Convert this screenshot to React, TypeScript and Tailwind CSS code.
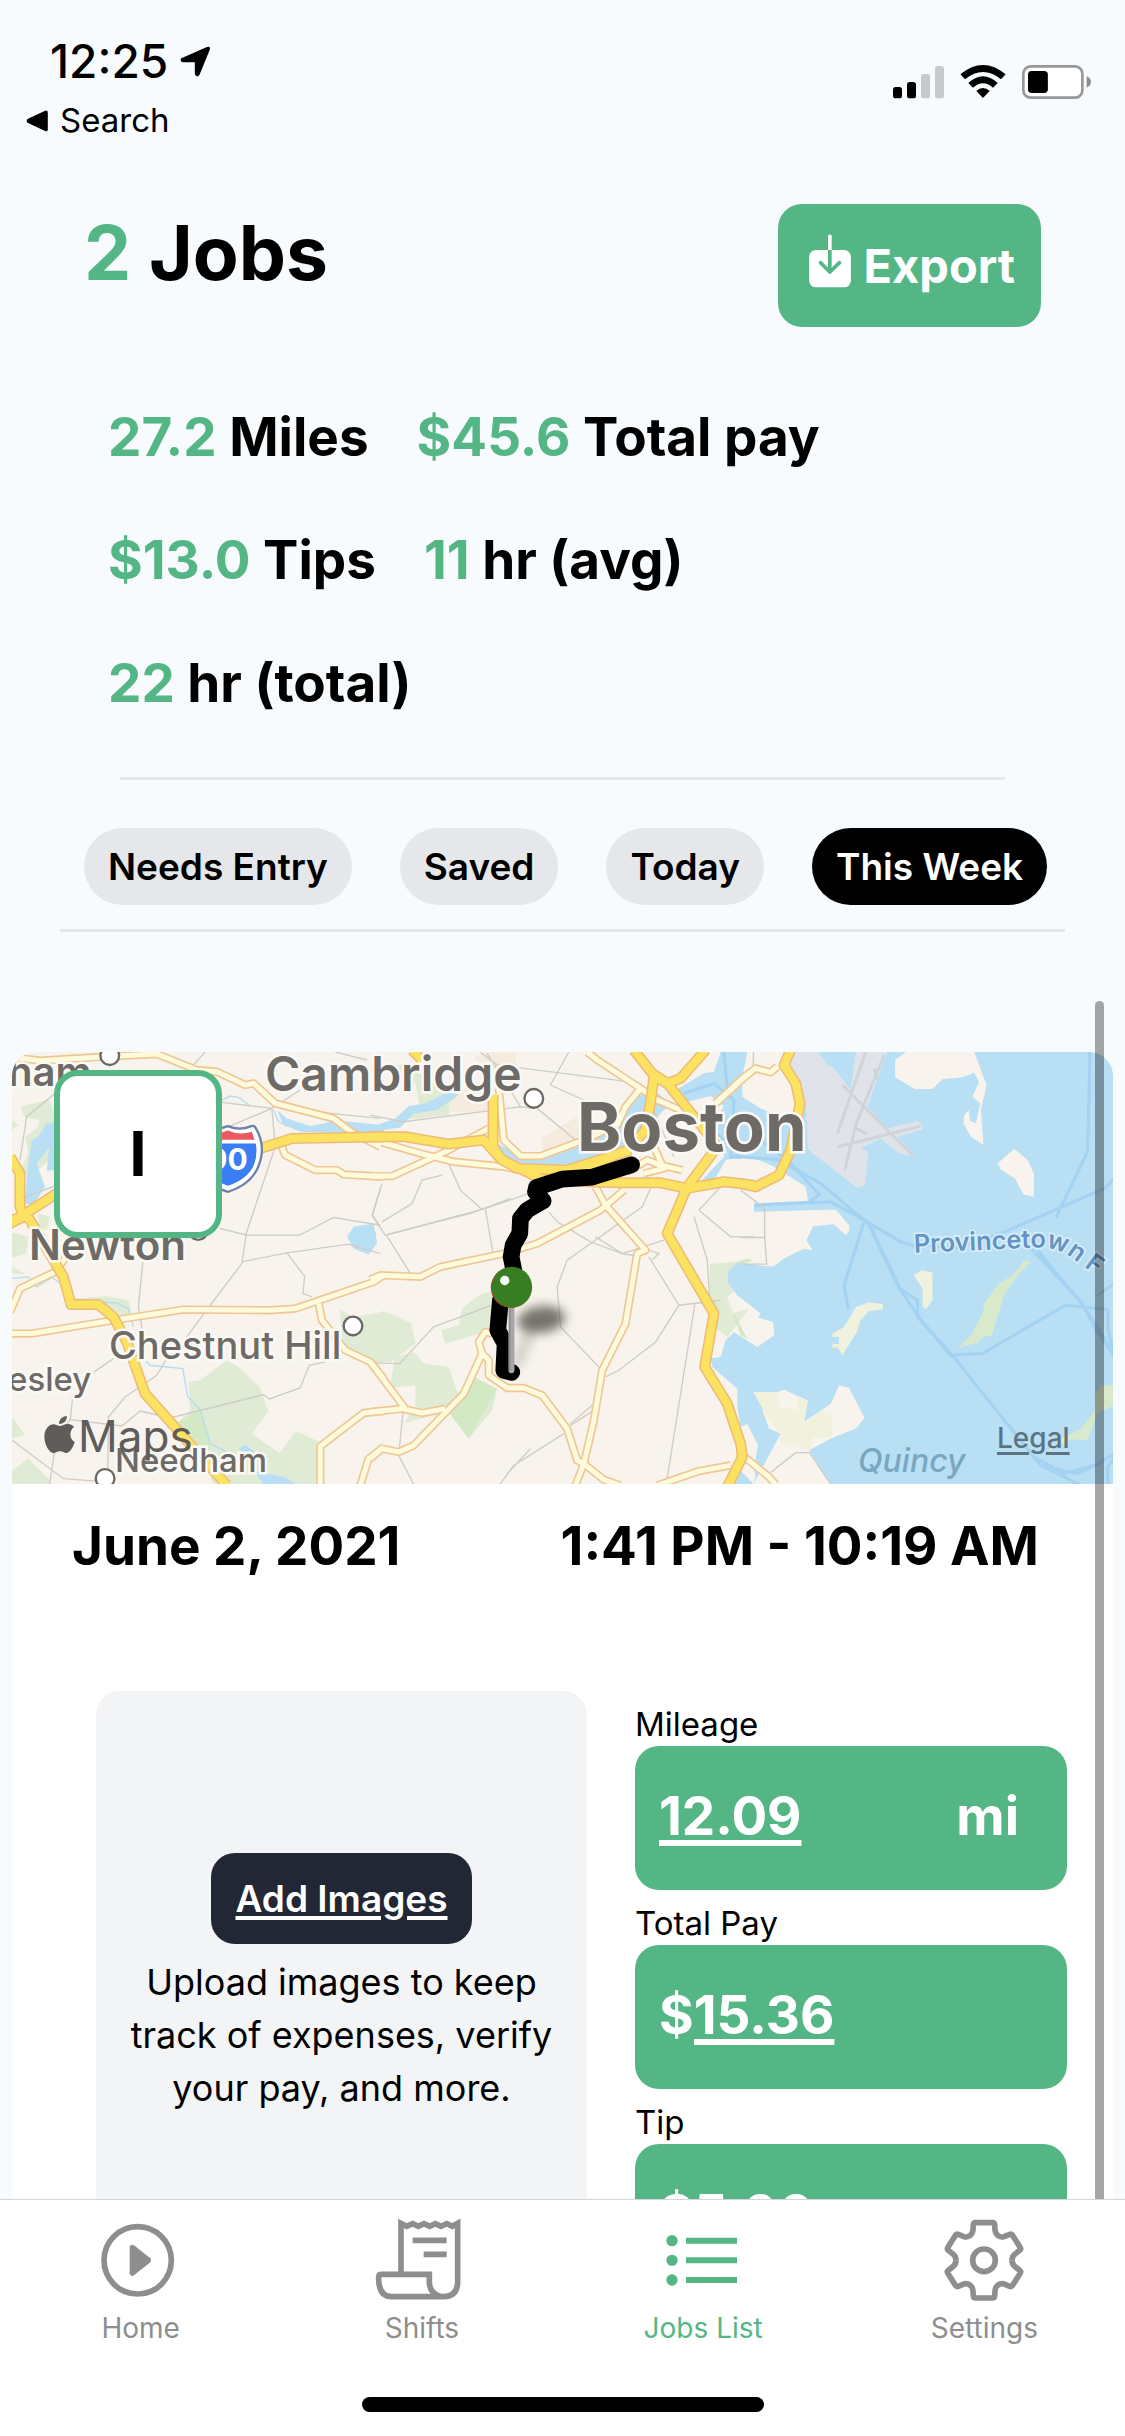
import React, { useState } from "react";

type Shape = [number, string];

/* Map artwork is drawn in three neighbouring sheets; the first number is the sheet's x origin. */
const A = 0;
const B = 1110;
const C = 2220;

const parks: Shape[] = [
  [A, "M60 200L145 178L175 240L160 350L90 410L60 395L85 340L75 290L110 265L120 240L75 232Z"],
  [A, "M30 235L55 255L30 275Z M115 520L150 530L140 570L115 560Z M30 575L85 590L78 640L30 655Z M30 675L75 702L30 700Z"],
  [A, "M215 775L320 768L385 780L400 840L375 835L330 800Z"],
  [A, "M1018 808L1060 830L1150 815V965H1090L1030 930Z"],
  [A, "M565 1025L600 1020L680 960L715 980L778 1040L805 1112L755 1180L838 1238L888 1172L958 1205V1335H640L600 1225L535 1145L570 1110Z"],
  [A, "M30 1120L75 1185L30 1195Z M30 1295L85 1255L150 1320V1335H30Z"],
  [B, "M0 825L40 812L122 848L136 910L60 965L0 968Z"],
  [B, "M75 950L130 935L160 970L235 980L262 1060L310 1010L380 1045L365 1110L295 1195L235 1115L100 1148L135 1100V1035L58 1042Z"],
  [B, "M212 870L265 855L275 805L325 765L372 750L365 870L225 910Z"],
  [B, "M60 80L130 68L240 150L235 225L90 240L150 210L135 130Z"],
  [B, "M1017 672L1130 660V720L1070 770L1085 820L1135 805L1070 890L1017 850Z"],
];

const greens: Shape[] = [
  [A, "M600 1108L630 1225L600 1215L535 1145Z"],
  [B, "M262 1060L310 1010L380 1045L295 1195L235 1115Z"],
  [C, "M-10 665L20 655L40 662L0 672Z M-30 800L20 895L0 885Z"],
];

const sand: Shape[] = [
  [B, "M310 50L345 36H440L435 85L385 80L355 100Z M245 150L360 140V215H235Z"],
  [B, "M510 295L620 230L640 290L520 340Z"],
];

const waters: Shape[] = [
  [A, "M95 300L115 290L140 250L165 245V390L140 392L148 320L110 370L135 440L100 495L75 490L80 410Z"],
  [A, "M830 210L860 235L930 258L1010 242L1150 255V278H1040L900 275L850 255Z"],
  [A, "M1040 590L1060 560L1120 550L1130 610L1105 643L1060 625Z"],
  [A, "M715 1225L735 1213L770 1240L750 1255Z M760 1290L850 1310L890 1332H790Z"],
  [B, "M0 262L75 235L115 198L165 190L245 150L265 165L200 210L130 220L90 262L0 275Z"],
  [B, "M380 310L450 345H520L640 300L730 270L800 170L850 150L900 190L830 260L790 330L640 380L580 372L480 378L390 345Z"],
  [B, "M0 555L18 580L12 612L0 635Z"],
  [C, "M-60 36L-80 95L-110 100L-185 145L-180 190L-90 168L-50 200L-80 240L-60 290L-50 350L-115 420L-82 425L-45 360L10 350L60 362L100 380L195 440L202 482L40 490V515L285 508L325 555V572L315 585L280 552L217 558L197 600L215 630L190 626L130 655L97 680L78 678L-10 668L-35 690L-40 725L-10 765L60 820L52 832L97 845L101 885L50 920L-20 876L-45 900L-60 950L-90 955L-85 980L-10 1045L-10 1100L0 1160L20 1150L52 1215L40 1280L45 1310L38 1332H1160V36Z"],
  [C, "M-50 1332L-20 1270L40 1332Z"],
];

const land: Shape[] = [
  [C, "M20 36H130L120 80L165 150L175 235L110 225L60 205L5 170V110Z"],
  [C, "M463 60L495 36H700L737 135L720 210L728 315L690 290L668 250L670 225L684 210L688 243L705 250L718 190L695 170L714 125L700 98L665 112L605 118L575 147H522L463 112Z"],
  [C, "M770 370L820 326L860 360L879 400V470L848 463L822 415L780 388Z"],
  [C, "M38 1332L120 1180L85 1165L65 1110L110 1055L130 1048L200 1080L190 1145L270 1090L295 1035L325 1042L371 1133L345 1165L275 1192L205 1230L270 1332Z"],
];

const islands: Shape[] = [
  [C, "M519 705L543 690L575 697V780L556 806L545 800V745Z"],
  [C, "M275 880L310 860L345 800L385 786L426 792V808L385 812L358 842L350 872L305 945L290 920L275 925V910L295 912V890H275Z"],
  [C, "M38 1055H108L120 1100L168 1110V1070L202 1080L190 1150L240 1112L275 1122V1192H218L205 1230L118 1208L120 1180L85 1140Z"],
];

const greenIslands: Shape[] = [
  [C, "M655 922L690 885L725 820L730 790L770 735L820 700L850 660L870 665L830 705L790 765L752 888L735 886L710 908Z"],
  [C, "M920 1235L960 1195L1020 1165L1062 1110V1060L1080 1035H1120V1095L1070 1118L1040 1198H990Z"],
];

const ferries: Shape[] = [
  [C, "M-110 240L0 350L110 358L240 430L370 540L480 605L520 618"],
  [C, "M60 300L150 370L235 462L205 488 M40 495L270 485L380 545L475 745L530 780V830L635 945L830 1190L900 1275L1020 1335"],
  [C, "M370 545L310 735L323 810 M390 560L480 750L530 825L628 945L725 940L973 795L1100 808L1102 870L1120 950"],
  [C, "M1047 36L1040 335L945 532 M520 610L640 625L780 580L1090 445L1120 415"],
  [C, "M870 625L1020 785L1060 860L1120 950 M890 630L1030 800L1120 940 M1065 768L1120 730"],
  [C, "M800 1150L880 1250L970 1300L1060 1275L1120 1240 M900 1275L1010 1300L1090 1260 M1100 1335V1280L1120 1250"],
  [C, "M-170 160L-80 130L-20 180L-30 350L0 352 M-50 36L-40 150"],
];

const streets: Shape[] = [
  [A, "M60 360L80 230L165 160 M75 472L165 437 M615 36L570 85 M660 565L740 585H898L1000 532L1140 555"],
  [A, "M665 187L815 205L900 150 M680 262L815 205L825 320L738 580L725 670L630 795L560 890 M895 210L1140 235"],
  [A, "M725 665L860 638L1045 612L1140 640 M860 638L913 708L908 760L935 770 M1140 445L1117 525L1140 560"],
  [A, "M428 665L415 800L430 890 M520 920L470 1005L375 1070L325 1130L323 1315 M275 1000L340 955"],
  [A, "M218 1065L211 1138L365 1157L420 1112L510 1133L790 1063L807 1076L900 1043L927 975L975 965 M30 1195L190 1315L330 1325"],
  [A, "M211 1138L170 1190L148 1335 M1005 36L1100 60"],
  [B, "M0 225L100 245L450 200L490 205 M330 36L380 75L720 118L810 130 M595 36L540 135L650 185 M350 40L450 200"],
  [B, "M500 205L640 320 M215 325L270 450L335 508L520 445 M345 508L368 640 M335 508L45 585L5 525L35 430"],
  [B, "M45 585L300 520L420 475 M50 588L120 700 M35 545L125 490L155 420L215 405"],
  [B, "M535 515L560 545L660 605L755 640L880 600 M840 445L815 500L590 660L560 740L570 860L690 985"],
  [B, "M675 590L755 640L800 648L835 630L865 640L845 660 M835 650L925 795L855 905L745 990L705 1010"],
  [B, "M925 795L1050 780 M973 790L888 1325 M970 530L1010 660L1020 830 M985 510L1080 590H1150 M985 510L1050 440"],
  [B, "M0 968L88 970L190 860L365 795 M98 1115L85 1245L130 1332 M665 1095L600 1150 M600 1155L670 1110"],
  [B, "M580 1180L430 1275L388 1332 M480 1225L410 1300 M850 210L870 260L910 350"],
  [C, "M38 36V80 M0 450L72 505V592H0 M72 592L78 672H0 M90 1296L165 1237H207L270 1332"],
];

const minor: Shape[] = [
  [A, "M25 50L120 62L310 50L470 42L590 90L650 95L735 135L760 130L825 190L1000 235L1060 280L1140 320"],
  [A, "M845 320L855 345L945 390H1010L1030 403L1150 410"],
  [A, "M30 880H95L340 840L550 808L810 810L885 805L1120 725L1150 705"],
  [A, "M955 790L965 840L1035 930L1110 965L1150 1015"],
  [A, "M30 815L60 745L165 695L195 655"],
  [A, "M960 1335V1218L1090 1118L1150 1112 M1080 1335L1105 1255L1150 1220"],
  [B, "M0 300L45 310L150 340L250 365L400 380L500 400L560 440"],
  [B, "M0 408H65L225 335L355 265"],
  [B, "M0 718L30 705L150 710L210 680L400 640L500 610L690 510L760 450"],
  [B, "M385 145L400 300L450 348H510L640 300L740 255L765 200L810 145L680 60L650 36"],
  [B, "M675 440L705 495L825 630L800 640L765 850L695 990L670 1140L640 1270L615 1335"],
  [B, "M0 965L105 1105 M0 1115L95 1105L155 1118L225 1105"],
  [B, "M0 1255L35 1225L85 1235L130 1215L280 1060L335 940L325 905L345 875L365 880"],
  [B, "M335 940L355 960V1005L410 1043H460L515 1065L590 1165L620 1260L640 1270L700 1318L750 1335"],
  [B, "M860 1335L985 1292L1080 1275"],
  [B, "M810 145L860 180L930 210 M1035 190L1140 95"],
  [B, "M770 395L830 360L870 375L935 390 M850 320L880 385L820 400"],
  [C, "M-75 190L0 120L45 85L90 97L110 80 M0 1240L85 1310L105 1332"],
];

const highways: Shape[] = [
  [A, "M30 350L60 400V500L70 530L30 550 M70 525L170 460"],
  [A, "M30 545L70 525L90 540L190 710L213 793H295L340 830L380 905L435 1060L560 1200L680 1335"],
  [A, "M780 325L875 295L1150 290"],
  [B, "M0 290H105L235 312L340 300L390 355L440 385L590 390L780 330"],
  [B, "M125 30L155 60 M368 165V320L395 360L520 420L740 428H870L950 445L1060 425L1150 435"],
  [B, "M790 30L845 100L890 130L1010 280L1040 320L950 440L890 580L1030 820L1002 980L1070 1090L1110 1210L1115 1250L1070 1340"],
  [B, "M1005 30L930 115L890 130L850 110L840 185L825 270L770 330L640 385"],
  [C, "M150 30L130 75L165 130L178 190L150 330L115 405L45 440L0 430"],
];

function Paths({ items, className }: { items: Shape[]; className: string }) {
  return (
    <g className={className}>
      {items.map(([x, d], i) => (
        <path key={i} d={d} transform={`translate(${x} 0)`} />
      ))}
    </g>
  );
}

function Town({ x, y }: { x: number; y: number }) {
  return <circle cx={x} cy={y} r="28" className="fill-white stroke-[#6b6864] stroke-[7]" />;
}

function MapLabel({ className, children }: { className: string; children: string }) {
  return (
    <span
      className={
        "absolute leading-none whitespace-nowrap text-[#6e6a65] [paint-order:stroke] [-webkit-text-stroke:5px_#fbf9f5] " +
        className
      }
    >
      {children}
    </span>
  );
}

function RouteMap() {
  return (
    <div className="relative h-[432px] overflow-hidden rounded-t-3xl bg-[#f8f4ed]">
      <svg
        viewBox="36 36 3300 1296"
        preserveAspectRatio="xMinYMin slice"
        className="block h-full w-full fill-none"
        role="img"
        aria-label="Route map of Boston"
      >
        <defs>
          <filter id="soft" x="-50%" y="-50%" width="200%" height="200%">
            <feGaussianBlur stdDeviation="16" />
          </filter>
          <path id="ferry-label" d="M2740 638L3110 622Q3170 622 3215 655L3400 790" />
        </defs>
        <Paths items={parks} className="fill-[#dfebd5]" />
        <Paths items={greens} className="fill-[#d2e9c4]" />
        <Paths items={sand} className="fill-[#f5ecdf]" />
        <Paths items={waters} className="fill-[#b8dff3]" />
        <Paths items={land} className="fill-[#f8f4ed]" />
        <Paths items={islands} className="fill-[#f0f2dd]" />
        <Paths items={greenIslands} className="fill-[#d9e9cc]" />
        <g transform="translate(2220 0)">
          <path
            className="fill-[#e0e4ea]"
            d="M160 36H232L262 75L280 85L330 150L345 36H438L380 200L440 265L530 243L545 255V268L470 290L524 350L475 340L420 295L360 325L383 335L372 437L348 443L202 328L195 190L180 130L145 80Z"
          />
          <path
            className="stroke-[#cfd4d8] stroke-[9]"
            d="M375 36L290 280 M430 45L345 255L312 390 M305 135L520 350 M290 320L540 258 M400 85L410 120 M345 265L380 282"
          />
        </g>
        <Paths items={ferries} className="stroke-[#a3d2f2] stroke-[9]" />
        <path
          d="M380 910L450 975L548 985L562 1068L600 1108L630 1210L680 1235 M665 180L690 168L715 172L750 198 M820 210L835 245L860 258 M30 715L85 710L110 740L155 712L190 735 M290 785L350 788L385 805L400 860"
          className="stroke-[#b5dcf0] stroke-[4]"
        />
        <Paths items={streets} className="stroke-[#cfccc7] stroke-[4]" />
        <Paths items={minor} className="stroke-[#efc795] stroke-[25] [stroke-linejoin:round]" />
        <Paths items={minor} className="stroke-[#fdfbdc] stroke-[15] [stroke-linejoin:round]" />
        <Paths items={highways} className="stroke-[#efb978] stroke-[33] [stroke-linejoin:round]" />
        <Paths items={highways} className="stroke-[#fbe261] stroke-[24] [stroke-linejoin:round]" />

        <g transform="translate(683 355)">
          <path
            d="M-70 -97Q-35 -82 0 -97Q35 -82 70 -97Q80 -100 84 -90Q108 -50 100 -5Q85 75 0 100Q-85 75 -100 -5Q-108 -50 -84 -90Q-80 -100 -70 -97Z"
            className="fill-white stroke-[#6f82ad] stroke-[7]"
          />
          <path d="M-72 -80Q-35 -68 0 -84Q35 -68 72 -80L80 -56H-80Z" className="fill-[#ea5a5f]" />
          <path d="M-84 -45H84Q98 50 0 82Q-98 50 -84 -45Z" className="fill-[#3b7df3]" />
          <text textAnchor="middle" y="36" className="fill-white text-[90px] font-bold">
            90
          </text>
        </g>

        <Town x={329} y={47} />
        <Town x={594} y={571} />
        <Town x={1058} y={857} />
        <Town x={315} y={1314} />
        <Town x={1600} y={175} />

        <ellipse cx="1622" cy="838" rx="72" ry="40" className="fill-[#55524d]" opacity="0.8" filter="url(#soft)" transform="rotate(-8 1622 838)" />
        <path d="M1590 870L1545 980" className="stroke-[#55524d] stroke-[26]" opacity="0.3" filter="url(#soft)" />
        <path
          d="M1893 374L1775 411L1685 417L1608 442L1605 455L1628 482L1580 510L1560 535L1558 580L1538 615L1532 650L1540 690L1500 780L1492 870L1514 910L1510 990L1534 996"
          className="stroke-black stroke-[50] [stroke-linecap:round] [stroke-linejoin:round]"
        />
        <path d="M1533 790V990" className="stroke-[#a6a6a9] stroke-[18] [stroke-linecap:round]" />
        <path d="M1528 790V990" className="stroke-[#8f8f93] stroke-[5]" />
        <circle cx="1532" cy="742" r="61" className="fill-[#e03020]" />
        <circle cx="1534" cy="741" r="61" className="fill-[#377e22]" />
        <circle cx="1513" cy="721" r="14" className="fill-white" />

        <text className="fill-[#6494c2] stroke-[#d8eef9] stroke-[10] text-[76px] font-semibold [paint-order:stroke]">
          <textPath href="#ferry-label">Provincetown F</textPath>
        </text>
        <g transform="translate(133 1127)" className="fill-[#5f5d59]">
          <path d="M46 30C54 30 61 23 73 24C81 25 86 29 89 33C75 42 73 68 91 78C86 94 76 111 66 111C58 111 56 106 47 106C38 106 35 111 28 111C15 111 0 86 0 62C0 38 15 25 28 25C35 25 40 30 46 30Z" />
          <path d="M44 24C43 11 54 1 67 0C69 13 58 24 44 24Z" />
        </g>
      </svg>
      <MapLabel className="left-[-4px] top-0 text-[40px] font-semibold">ham</MapLabel>
      <MapLabel className="left-[17px] top-[172px] text-[42px] font-semibold">Newton</MapLabel>
      <MapLabel className="left-[97px] top-[274px] text-[38px] font-medium">Chestnut Hill</MapLabel>
      <MapLabel className="left-[-4px] top-[311px] text-[33px] font-medium">esley</MapLabel>
      <MapLabel className="left-[103px] top-[392px] text-[33px] font-medium">Needham</MapLabel>
      <MapLabel className="left-[253px] top-[-2px] text-[48px] font-semibold">Cambridge</MapLabel>
      <MapLabel className="left-[565px] top-[41px] text-[67px] font-bold">Boston</MapLabel>
      <span className="absolute left-[846px] top-[393px] text-[32px] leading-none font-medium italic text-[#78a7bf]">
        Quincy
      </span>
      <span className="absolute left-[66px] top-[362px] text-[44px] leading-none text-[#5f5d59]">Maps</span>
      <a
        href="#legal"
        className="absolute left-[985px] top-[372px] text-[28px] leading-none font-medium text-[#5b7481] underline decoration-[3px] underline-offset-4"
      >
        Legal
      </a>
      <div className="absolute left-[42px] top-[18px] flex size-[168px] items-center justify-center rounded-3xl border-[6px] border-[#55b685] bg-white text-[62px] leading-none font-bold">
        I
      </div>
    </div>
  );
}

function StatusBar() {
  return (
    <div className="flex justify-between pt-[38px] pr-[34px] pl-[26px]">
      <div className="flex flex-col gap-5">
        <div className="flex items-center gap-3 pl-6 text-[46px] leading-none font-medium">
          12:25
          <svg viewBox="538 76 92 92" className="size-[31px]" aria-hidden="true">
            <path d="M542 112L618 79Q630 75 626 88L596 161Q588 172 582 160V124H546Q536 121 542 112Z" />
          </svg>
        </div>
        <a href="#search" className="flex items-center gap-[11px] text-[33px] leading-none">
          <svg viewBox="78 268 68 66" className="h-[22px] w-[23px]" aria-hidden="true">
            <path d="M82 295L135 270Q143 268 143 276V326Q143 334 135 331L82 306Q77 301 82 295Z" />
          </svg>
          Search
        </a>
      </div>
      <div className="mt-[26px] flex h-9 gap-4">
        <svg viewBox="69 72 153 108" className="h-9 w-[51px]" aria-hidden="true">
          <rect x="69" y="141" width="27" height="34" rx="8" />
          <rect x="111" y="126" width="27" height="49" rx="8" />
          <rect x="153" y="102" width="27" height="73" rx="8" className="fill-[#c8c9cb]" />
          <rect x="195" y="78" width="27" height="97" rx="8" className="fill-[#c8c9cb]" />
        </svg>
        <svg viewBox="270 72 138 108" className="h-9 w-[46px]" aria-hidden="true">
          <path d="M271 103Q339 47 407 103L393 118Q339 74 285 118Z" />
          <path d="M295 129Q339 89 383 129L369 143Q339 117 309 143Z" />
          <path d="M319 153Q339 135 359 153L339 174Z" />
        </svg>
        <svg viewBox="456 72 208 108" className="h-9 w-[69px]" aria-hidden="true">
          <rect x="460" y="79" width="178" height="94" rx="22" className="fill-white stroke-[#97989a] stroke-[8]" />
          <rect x="474" y="93" width="60" height="66" rx="11" />
          <path d="M651 108Q664 115 664 126Q664 137 651 143Z" className="fill-[#8b8c8e]" />
        </svg>
      </div>
    </div>
  );
}

const stats = [
  ["27.2", "Miles"],
  ["$45.6", "Total pay"],
  ["$13.0", "Tips"],
  ["11", "hr (avg)"],
  ["22", "hr (total)"],
];

const filters = ["Needs Entry", "Saved", "Today", "This Week"];

function Field({ label, name, value, prefix, unit }: { label: string; name: string; value: string; prefix?: string; unit?: string }) {
  return (
    <div className="pt-3">
      <label htmlFor={name} className="block text-[33px] leading-[43px]">
        {label}
      </label>
      <div className="flex h-36 items-center rounded-3xl bg-[#55b685] pr-12 pb-1 pl-6 text-[53px] leading-none font-bold text-white">
        {prefix}
        <input
          id={name}
          defaultValue={value}
          className="h-[72px] w-0 min-w-0 flex-1 bg-transparent underline decoration-[6px] underline-offset-[5px] outline-none"
        />
        {unit}
      </div>
    </div>
  );
}

function HomeIcon() {
  return (
    <svg viewBox="116 84 252 252" className="size-[84px]" aria-hidden="true">
      <circle cx="232" cy="211" r="101" className="fill-none stroke-current stroke-[17]" />
      <path d="M208 172Q210 160 221 166L270 205Q275 211 270 217L221 256Q210 262 208 250Z" className="fill-current" />
    </svg>
  );
}

function ShiftsIcon() {
  return (
    <svg viewBox="960 84 252 252" className="size-[84px] overflow-visible fill-none stroke-current stroke-[17]" aria-hidden="true">
      <path d="M1023 250V100L1040 109L1058 101L1075 109L1092 101L1109 109L1126 101L1143 109L1160 101L1177 109L1193 100V278Q1191 320 1150 320H995Q958 320 956 270V262Q956 253 965 253H1108V275Q1108 312 1145 320" />
      <path d="M1058 151H1160 M1091 193H1160" />
    </svg>
  );
}

function ListIcon() {
  return (
    <svg viewBox="183 84 252 252" className="size-[84px]" aria-hidden="true">
      <g className="fill-current">
        <circle cx="216" cy="152" r="17" />
        <circle cx="216" cy="211" r="17" />
        <circle cx="216" cy="270" r="17" />
      </g>
      <path d="M258 152H411M258 211H411M258 270H411" className="stroke-current stroke-[18]" />
    </svg>
  );
}

function GearIcon() {
  const quarter =
    "M0 -113H26Q31 -113 32 -107L33 -92Q34 -80 42 -74Q52 -68 60 -71L77 -78Q82 -80 85 -76L109 -38Q112 -33 107 -30L92 -18Q84 -11 84 0";
  return (
    <svg viewBox="-126 -127 252 252" className="size-[84px] fill-none stroke-current stroke-[17]" aria-hidden="true">
      <path d={quarter} />
      <path d={quarter} transform="scale(-1 1)" />
      <path d={quarter} transform="scale(1 -1)" />
      <path d={quarter} transform="scale(-1 -1)" />
      <circle r="34" />
    </svg>
  );
}

const tabs = [
  { label: "Home", icon: HomeIcon, color: "text-[#8e8e8e]" },
  { label: "Shifts", icon: ShiftsIcon, color: "text-[#8e8e8e]" },
  { label: "Jobs List", icon: ListIcon, color: "text-[#55b685]" },
  { label: "Settings", icon: GearIcon, color: "text-[#8e8e8e]" },
];

export default function App() {
  const [active, setActive] = useState("This Week");
  return (
    <div className="flex h-screen flex-col overflow-hidden bg-[#f7fbfe] font-['Inter',sans-serif] text-black">
      <StatusBar />
      <header>
        <div className="mt-[67px] flex items-start justify-between px-[84px]">
          <h1 className="mt-[11px] text-[75px] leading-none font-bold">
            <span className="text-[#55b685]">2</span> Jobs
          </h1>
          <button className="flex h-[123px] items-center gap-3 rounded-3xl bg-[#55b685] pr-[26px] pl-[31px] text-[47px] leading-none font-bold text-white">
            <svg viewBox="118 130 125 192" className="h-16 w-[42px]" aria-hidden="true">
              <rect x="118" y="178" width="125" height="112" rx="20" className="fill-white" />
              <path d="M180 137V178" className="stroke-white stroke-[11] [stroke-linecap:round]" />
              <path d="M180 178V244" className="stroke-[#55b685] stroke-[11]" />
              <path
                d="M152 216L180 244L209 216"
                className="fill-none stroke-[#55b685] stroke-[11] [stroke-linecap:round] [stroke-linejoin:round]"
              />
            </svg>
            Export
          </button>
        </div>
        <div className="mt-[73px] flex flex-wrap gap-12 px-[108px] text-[53px] leading-[75px] font-bold">
          {stats.map(([value, label]) => (
            <p key={label} className="whitespace-nowrap">
              <span className="text-[#55b685]">{value}</span> {label}
            </p>
          ))}
        </div>
        <hr className="mx-[120px] mt-14 border-t-[3px] border-[#e5e7eb]" />
        <div className="mt-12 flex gap-12 px-[84px]">
          {filters.map((name) => (
            <button
              key={name}
              aria-pressed={active === name}
              onClick={() => setActive(name)}
              className={
                "h-[77px] shrink-0 rounded-full px-6 text-[37px] leading-none font-semibold " +
                (active === name ? "bg-black text-white" : "bg-[#e6e7ea]")
              }
            >
              {name}
            </button>
          ))}
        </div>
        <hr className="mx-[60px] mt-6 border-t-[3px] border-[#e5e7eb]" />
      </header>

      <main className="relative min-h-0 flex-1 overflow-hidden px-3 pt-[120px]">
        <article className="rounded-t-3xl bg-white">
          <RouteMap />
          <div className="flex justify-between pt-[25px] pr-[74px] pl-[60px] text-[53px] leading-[75px] font-bold">
            <time dateTime="2021-06-02">June 2, 2021</time>
            <span>1:41 PM - 10:19 AM</span>
          </div>
          <div className="mt-[107px] grid grid-cols-[491fr_432fr] items-start gap-12 pr-[46px] pl-[84px]">
            <section className="flex min-h-[586px] flex-col items-center justify-center rounded-3xl bg-[#f3f4f6] px-6">
              <button className="h-[91px] rounded-3xl bg-[#212734] px-6 text-[37px] leading-none font-semibold text-white underline decoration-4 underline-offset-4">
                Add Images
              </button>
              <p className="mt-3 text-center text-[36px] leading-[53px]">
                Upload images to keep track of expenses, verify your pay, and more.
              </p>
            </section>
            <form>
              <Field label="Mileage" name="mileage" value="12.09" unit="mi" />
              <Field label="Total Pay" name="total-pay" value="15.36" prefix="$" />
              <Field label="Tip" name="tip" value="5.00" prefix="$" />
            </form>
          </div>
        </article>
        <div className="absolute top-[69px] right-[21px] -bottom-4 w-[9px] rounded-full bg-black/35" />
      </main>

      <footer className="border-t border-[#d4d5d7] bg-white">
        <nav className="grid grid-cols-4 pt-[18px]">
          {tabs.map(({ label, icon: Icon, color }) => (
            <a key={label} href="#tab" className={"flex flex-col items-center gap-3 text-[28px] leading-none " + color}>
              <Icon />
              {label}
            </a>
          ))}
        </nav>
        <div className="mx-auto mt-[55px] mb-6 h-[15px] w-[402px] rounded-full bg-black" />
      </footer>
    </div>
  );
}
